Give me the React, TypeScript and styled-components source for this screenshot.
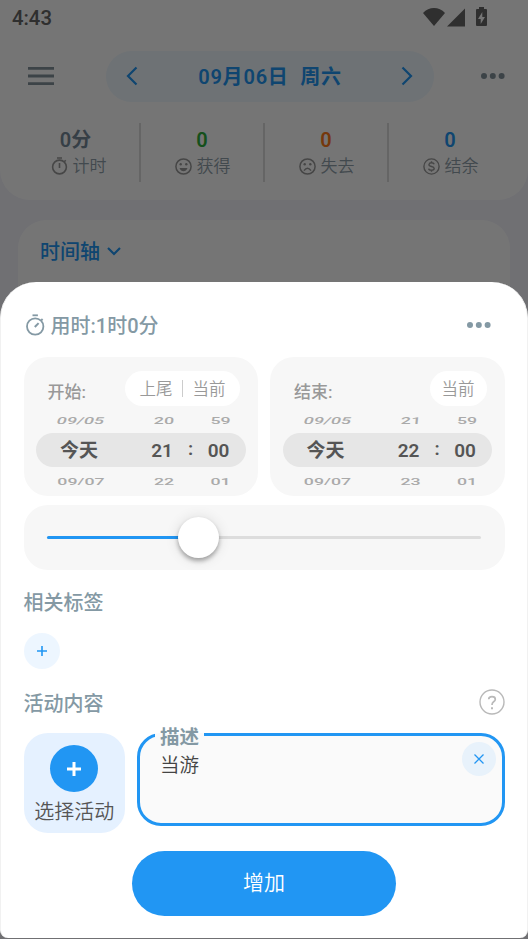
import React from "react";
import styled, { createGlobalStyle } from "styled-components";

const GlobalStyle = createGlobalStyle`
  *, *::before, *::after { box-sizing: border-box; }
  html, body { margin: 0; padding: 0; height: 100%; }
  body {
    font-family: Roboto, "Noto Sans CJK SC", sans-serif;
    background: #707075;
    overflow: hidden;
  }
  button { font: inherit; border: 0; padding: 0; margin: 0; background: none; color: inherit; }
`;

const BLUE = "#2196f3";
const SLATE = "#8499a4";

const Screen = styled.div`
  position: relative;
  width: 528px;
  height: 939px;
  overflow: hidden;
  background: #f3f3fb;
`;

const Scrim = styled.div`
  position: absolute;
  inset: 0;
  display: flex;
  flex-direction: column;
  justify-content: flex-end;
  background: rgba(0, 0, 0, 0.54);
`;

const TopCard = styled.header`
  height: 200px;
  background: #fff;
  border-radius: 0 0 30px 30px;
`;

const StatusBar = styled.div`
  display: flex;
  align-items: center;
  justify-content: space-between;
  height: 51px;
  padding: 0 40px 14px 12px;
  color: #666;
  font-size: 20.3px;
  font-weight: 500;
  line-height: 37px;
  svg { margin-bottom: 3px; }
`;

const NavRow = styled.div`
  display: flex;
  align-items: center;
  height: 51px;
  padding: 0 22px 0 28px;
  > svg { margin-bottom: 1px; }
`;

const DatePill = styled.div`
  display: flex;
  align-items: center;
  justify-content: space-between;
  width: 328px;
  height: 51px;
  margin: 0 46px 0 52px;
  padding: 0 21px 0 20px;
  border-radius: 26px;
  background: #eff8ff;
  color: ${BLUE};
  svg { margin-bottom: 1px; }
`;

const DateText = styled.span`
  padding: 2px 0 0 1px;
  font-size: 20px;
  font-weight: 600;
  line-height: 51px;
  letter-spacing: 0.8px;
  white-space: pre;
`;

const Stats = styled.div`
  display: grid;
  grid-template-columns: repeat(4, 124px);
  margin: 21px 0 0 17px;
  height: 59px;
`;

const Stat = styled.div`
  display: flex;
  flex-direction: column;
  align-items: center;
  border-right: 2px solid #dcdcdc;
  &:last-child { border-right-color: transparent; }
`;

const StatValue = styled.strong<{ $color: string; $nudge: number }>`
  height: 33px;
  padding-right: ${(p) => p.$nudge}px;
  color: ${(p) => p.$color};
  font-size: 20px;
  font-weight: 600;
  line-height: 35px;
`;

const StatLabel = styled.span`
  display: flex;
  align-items: center;
  gap: 5px;
  height: 20px;
  padding-left: 1px;
  color: #90a0aa;
  font-size: 17px;
  font-weight: 350;
  line-height: 20px;
  svg { margin-bottom: 2px; color: #999; }
`;

const TimelineCard = styled.section`
  margin: 20px 18px 0;
  height: 700px;
  padding: 16px 22px;
  border-radius: 28px;
  background: #fff;
`;

const TimelineTitle = styled.h2`
  display: flex;
  align-items: center;
  gap: 7px;
  height: 30px;
  margin: 0;
  color: ${BLUE};
  font-size: 20px;
  font-weight: 500;
  line-height: 30px;
  span { padding-top: 2px; }
`;

const Sheet = styled.main`
  height: 656px;
  margin-bottom: 1px;
  padding: 24px 22.5px 0 22.5px;
  border: solid #f1f1f1;
  border-width: 0 1px;
  border-radius: 36px 36px 8px 8px;
  background: #fff;
`;

const SheetHeader = styled.div`
  display: flex;
  align-items: center;
  height: 38px;
  padding-right: 12.5px;
  color: ${SLATE};
  > svg:first-child { margin-bottom: 1px; }
`;

const Duration = styled.h1`
  flex: 1;
  margin: 2px 0 0 5px;
  font-size: 20px;
  font-weight: 500;
  line-height: 38px;
`;

const Pickers = styled.div`
  display: grid;
  grid-template-columns: 234.5px 234.5px;
  gap: 12px;
  margin-top: 13px;
`;

const Picker = styled.section`
  height: 139px;
  padding: 14px 12.5px 0;
  border-radius: 24px;
  background: #f7f7f7;
`;

const PickerHead = styled.div`
  display: flex;
  justify-content: space-between;
  height: 35px;
  padding: 0 5.5px 0 11.5px;
`;

const PickerLabel = styled.span`
  padding-top: 8px;
  color: #999;
  font-size: 17px;
  font-weight: 500;
  line-height: 27px;
`;

const Quick = styled.div<{ $wide: boolean }>`
  display: flex;
  align-items: center;
  height: 35px;
  padding: 0 ${(p) => (p.$wide ? "14.5px" : "12px")};
  border-radius: 18px;
  background: #fff;
  color: #999;
  font-size: 16.5px;
  font-weight: 350;
  line-height: 35px;
  button { width: 33px; height: 35px; padding-top: 1px; white-space: nowrap; }
`;

const QuickDivider = styled.i`
  width: 1px;
  height: 17px;
  margin: 0 9.5px;
  background: #ccc;
`;

const Wheel = styled.div<{ $active?: boolean; $height: number }>`
  display: grid;
  grid-template-columns: 86px 58px 21px 35px;
  justify-items: center;
  height: ${(p) => p.$height}px;
  padding-left: ${(p) => (p.$active ? 0 : 2)}px;
  border-radius: 17px;
  background: ${(p) => (p.$active ? "#e6e6e6" : "transparent")};
  color: ${(p) => (p.$active ? "#555" : "#aaa")};
  font-size: ${(p) => (p.$active ? "19px" : "17.8px")};
  font-weight: ${(p) => (p.$active ? 600 : 500)};
  line-height: ${(p) => (p.$active ? "36px" : "29px")};
  span { white-space: nowrap; }
  > :nth-child(2) { justify-self: end; width: 36px; text-align: center; }
  b { font-weight: inherit; line-height: 32px; }
`;

const Flat = styled.span<{ $skew?: number }>`
  height: 29px;
  transform: scaleY(0.54) skewX(${(p) => p.$skew ?? 0}deg);
`;

const SliderCard = styled.div`
  display: flex;
  align-items: center;
  height: 65px;
  margin-top: 9px;
  padding: 0 23.5px;
  border-radius: 24px;
  background: #f7f7f7;
`;

const Track = styled.div`
  display: flex;
  align-items: center;
  width: 100%;
  height: 3px;
  border-radius: 2px;
  background: #ddd;
`;

const TrackFill = styled.div`
  width: 132px;
  height: 3px;
  border-radius: 2px 0 0 2px;
  background: ${BLUE};
`;

const Thumb = styled.div`
  width: 41px;
  height: 41px;
  flex: none;
  margin-left: -1px;
  border-radius: 50%;
  background: #fff;
  box-shadow: 0 3px 4px rgba(0, 0, 0, 0.3), 0 1px 14px rgba(0, 0, 0, 0.12);
`;

const SectionHead = styled.div`
  display: flex;
  align-items: center;
  justify-content: space-between;
  height: 30px;
  color: ${SLATE};
  font-size: 20px;
  font-weight: 500;
  line-height: 30px;
  span { padding-top: 3px; }
`;

const TagSection = styled.section`
  margin-top: 16.5px;
`;

const AddTag = styled.button`
  display: grid;
  place-items: center;
  width: 36px;
  height: 36px;
  margin-top: 16.5px;
  border-radius: 50%;
  background: #edf6ff;
  color: ${BLUE};
`;

const ActivitySection = styled.section`
  margin-top: 17.5px;
  span { padding-top: 4px; }
`;

const ActivityRow = styled.div`
  display: flex;
  gap: 12px;
  height: 100px;
  margin-top: 16.5px;
`;

const ActivityButton = styled.button`
  display: flex;
  flex-direction: column;
  align-items: center;
  width: 101.5px;
  height: 100px;
  padding-top: 12px;
  border-radius: 24px;
  background: #e5f1ff;
  color: #555;
  font-size: 20px;
  font-weight: 350;
  line-height: 41px;
`;

const ActivityPlus = styled.div`
  display: grid;
  place-items: center;
  width: 48px;
  height: 48px;
  border-radius: 50%;
  background: ${BLUE};
  color: #fff;
`;

const Field = styled.fieldset`
  flex: 1;
  min-width: 0;
  height: 96px;
  margin: -3px 0 0;
  padding: 0 5.5px 0 20px;
  border: 3px solid ${BLUE};
  border-radius: 24px;
  background: #fafafa;
`;

const Legend = styled.legend`
  height: 9px;
  margin-left: -5px;
  padding: 0 5px;
  color: ${SLATE};
  font-size: 19.5px;
  font-weight: 600;
  line-height: 15px;
`;

const FieldBody = styled.div`
  display: flex;
  justify-content: space-between;
  width: 100%;
  padding-top: 8px;
  color: #444;
  font-size: 19.5px;
  font-weight: 350;
  line-height: 30px;
`;

const ClearButton = styled.button`
  display: grid;
  place-items: center;
  width: 34px;
  height: 34px;
  margin-top: -5.5px;
  border-radius: 50%;
  background: #e8f2fb;
  color: ${BLUE};
`;

const Submit = styled.button`
  display: block;
  width: 264px;
  height: 65px;
  margin: 17.5px auto 0 108.5px;
  border-radius: 33px;
  background: ${BLUE};
  color: #fff;
  font-size: 21px;
  font-weight: 350;
  line-height: 65px;
`;

const SystemIcons = () => (
  <svg width="65" height="20" viewBox="0 0 65 20" fill="currentColor">
    <path d="M0 6C6-.6 16-.6 22 6L11 19Z" />
    <path d="M42 1.500V19.500H24Z" />
    <path fillRule="evenodd" d="M56 0h5v2h2q1 0 1 1v15q0 1-1 1h-9q-1 0-1-1V3q0-1 1-1h2ZM59.300 5L55 12h2.700v5L62 10h-2.700Z" />
  </svg>
);

const MenuIcon = () => (
  <svg width="26" height="18" viewBox="0 0 26 18" fill="#83929c">
    <path d="M0 0h26v2.800H0ZM0 7.600h26v2.800H0ZM0 15.200h26V18H0Z" />
  </svg>
);

const Dots = ({ color }: { color: string }) => (
  <svg width="26" height="8" viewBox="0 0 26 8" fill={color}>
    <circle cx="4" cy="4" r="3" /><circle cx="12.800" cy="4" r="3" /><circle cx="21.600" cy="4" r="3" />
  </svg>
);

const Chevron = ({ left }: { left?: boolean }) => (
  <svg width="12" height="20" viewBox="0 0 12 20" fill="none" stroke="currentColor" strokeWidth="2.200">
    <path d={left ? "M10.500 1.500L2 10l8.500 8.500" : "M1.500 1.500L10 10l-8.500 8.500"} />
  </svg>
);

const ChevronDown = () => (
  <svg width="14" height="10" viewBox="0 0 14 10" fill="none" stroke="currentColor" strokeWidth="2.200">
    <path d="M1 2l6 6 6-6" />
  </svg>
);

const SmallTimer = () => (
  <svg width="17" height="19" viewBox="0 0 17 19" fill="none" stroke="currentColor" strokeWidth="1.600">
    <circle cx="8.500" cy="11" r="6.900" /><path d="M6 2h5M8.500 7v5M13.300 5.700l1.400-1.400" />
  </svg>
);

const Face = ({ sad }: { sad?: boolean }) => (
  <svg width="17" height="19" viewBox="0 0 17 19" fill="none" stroke="currentColor" strokeWidth="1.500">
    <circle cx="8.500" cy="10.500" r="7.600" />
    <circle cx="5.700" cy="8.300" r="1.200" fill="currentColor" stroke="none" />
    <circle cx="11.300" cy="8.300" r="1.200" fill="currentColor" stroke="none" />
    {sad ? <path d="M5 14.600q3.500-4.600 7 0" /> : <path d="M4.500 12h8q-1.300 3.200-4 3.200T4.500 12Z" fill="currentColor" stroke="none" />}
  </svg>
);

const Coin = () => (
  <svg width="17" height="19" viewBox="0 0 17 19" fill="none" stroke="currentColor" strokeWidth="1.400">
    <circle cx="8.500" cy="10.500" r="7.600" />
    <path d="M11.200 8.300Q10.700 6.800 8.500 6.800T5.900 8.600Q5.900 10 8.500 10.500T11.200 12.500Q11.200 14.200 8.500 14.200T5.700 12.600M8.500 5.200v1.600M8.500 14.200v1.600" />
  </svg>
);

const BigTimer = () => (
  <svg width="22" height="22" viewBox="0 0 22 22" fill="none" stroke="currentColor" strokeWidth="1.800">
    <circle cx="11.200" cy="12.500" r="8.200" /><path d="M8.500 1.300h5.400" /><path d="M10.800 13l3.800-3.900" strokeWidth="2" /><path d="M17.300 6.300l1.300-1.300" />
  </svg>
);

const Plus = ({ size, weight }: { size: number; weight: number }) => (
  <svg width={size} height={size} viewBox={`0 0 ${size} ${size}`} stroke="currentColor" strokeWidth={weight}>
    <path d={`M0 ${size / 2}H${size}M${size / 2} 0V${size}`} />
  </svg>
);

const Cross = () => (
  <svg width="10" height="10" viewBox="0 0 10 10" stroke="currentColor" strokeWidth="1.300">
    <path d="M.5.500l9 9M9.500.500l-9 9" />
  </svg>
);

const Help = () => (
  <svg width="26" height="26" viewBox="0 0 26 26" fill="none" stroke="#b9b9b9">
    <circle cx="13" cy="13" r="12" strokeWidth="1.400" />
    <path d="M9.700 10.300Q9.700 7.600 13 7.600T16.300 10.200Q16.300 11.600 14.600 12.800Q13 14 13 16" strokeWidth="1.700" />
    <path d="M13 18.200v2" strokeWidth="2" />
  </svg>
);

const stats = [
  { value: "0分", label: "计时", color: "#76899a", nudge: 5, icon: <SmallTimer /> },
  { value: "0", label: "获得", color: "#2fae3c", nudge: 0, icon: <Face /> },
  { value: "0", label: "失去", color: "#ff7a18", nudge: 0, icon: <Face sad /> },
  { value: "0", label: "结余", color: "#2196f3", nudge: 0, icon: <Coin /> },
];

interface TimePickerProps {
  label: string;
  quick: string[];
  hours: [string, string, string];
}

const TimePicker = ({ label, quick, hours }: TimePickerProps) => (
  <Picker>
    <PickerHead>
      <PickerLabel>{label}</PickerLabel>
      <Quick $wide={quick.length > 1}>
        {quick.map((q, i) => (
          <React.Fragment key={q}>
            {i > 0 && <QuickDivider />}
            <button>{q}</button>
          </React.Fragment>
        ))}
      </Quick>
    </PickerHead>
    <Wheel $height={27}><Flat $skew={-10}>09/05</Flat><Flat $skew={-3}>{hours[0]}</Flat><span /><Flat>59</Flat></Wheel>
    <Wheel $height={34} $active><span>今天</span><span>{hours[1]}</span><b>:</b><span>00</span></Wheel>
    <Wheel $height={29}><Flat>09/07</Flat><Flat>{hours[2]}</Flat><span /><Flat>01</Flat></Wheel>
  </Picker>
);

export default function App() {
  return (
    <Screen lang="zh-CN">
      <GlobalStyle />
      <TopCard>
        <StatusBar><span>4:43</span><SystemIcons /></StatusBar>
        <NavRow>
          <MenuIcon />
          <DatePill><Chevron left /><DateText>{"09月06日  周六"}</DateText><Chevron /></DatePill>
          <Dots color="#83929c" />
        </NavRow>
        <Stats>
          {stats.map((s) => (
            <Stat key={s.label}>
              <StatValue $color={s.color} $nudge={s.nudge}>{s.value}</StatValue>
              <StatLabel>{s.icon}{s.label}</StatLabel>
            </Stat>
          ))}
        </Stats>
      </TopCard>
      <TimelineCard>
        <TimelineTitle><span>时间轴</span><ChevronDown /></TimelineTitle>
      </TimelineCard>
      <Scrim>
        <Sheet>
          <SheetHeader>
            <BigTimer />
            <Duration>用时:1时0分</Duration>
            <Dots color={SLATE} />
          </SheetHeader>
          <Pickers>
            <TimePicker label="开始:" quick={["上尾", "当前"]} hours={["20", "21", "22"]} />
            <TimePicker label="结束:" quick={["当前"]} hours={["21", "22", "23"]} />
          </Pickers>
          <SliderCard><Track><TrackFill /><Thumb /></Track></SliderCard>
          <TagSection>
            <SectionHead><span>相关标签</span></SectionHead>
            <AddTag><Plus size={10} weight={1.6} /></AddTag>
          </TagSection>
          <ActivitySection>
            <SectionHead><span>活动内容</span><Help /></SectionHead>
            <ActivityRow>
              <ActivityButton>
                <ActivityPlus><Plus size={14} weight={3} /></ActivityPlus>
                选择活动
              </ActivityButton>
              <Field>
                <Legend>描述</Legend>
                <FieldBody><span>当游</span><ClearButton><Cross /></ClearButton></FieldBody>
              </Field>
            </ActivityRow>
          </ActivitySection>
          <Submit>增加</Submit>
        </Sheet>
      </Scrim>
    </Screen>
  );
}
